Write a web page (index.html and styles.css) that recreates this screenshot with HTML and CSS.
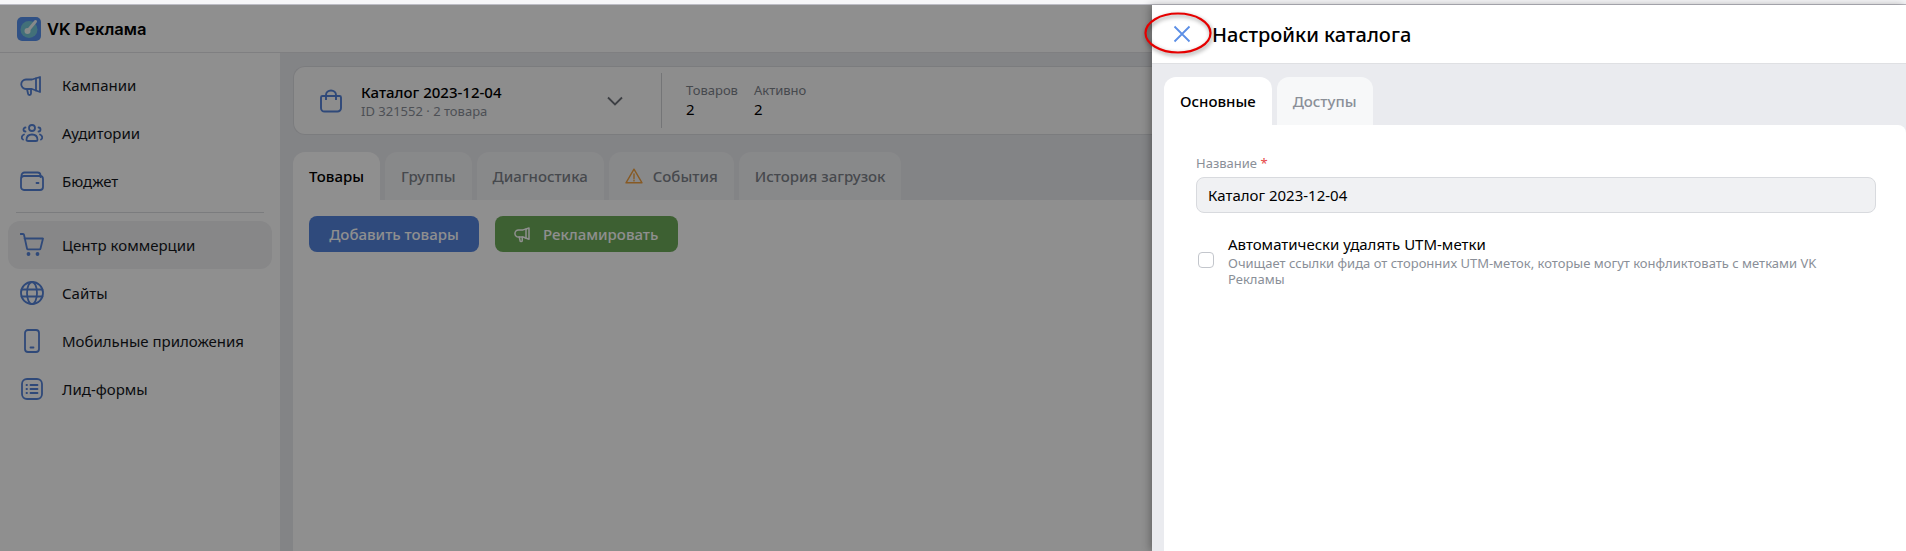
FILE: index.html
```html
<html lang="ru">
<head>
    <meta charset="UTF-8">
    <title>VK Реклама</title>
    <link rel="stylesheet" href="styles.css">
</head>
<body>
    <div class="app">
        <header class="topbar">
            <svg class="logo" viewBox="0 0 24 24">
                <rect width="24" height="24" rx="5" fill="#5690ee"/>
                <circle cx="12" cy="12.500" r="8.500" fill="#76c8d8"/>
                <path d="M11 13.500L18.500 4.500" stroke="#f0f6f6" stroke-width="3" stroke-linecap="round"/>
                <circle cx="10.500" cy="14" r="3" fill="#f0f6f6"/>
            </svg>
            <span class="brand">VK Реклама</span>
        </header>
        <div class="layout">
            <nav class="sidebar">
                <a class="nav-item">
                    <svg class="nav-icon" viewBox="0 0 24 24"><path d="M20 4v15l-8-3H6a3.500 3.500 0 0 1 0-9.500h6z"/><path d="M7 16l1 4.500a1.500 1.500 0 0 0 3 0V16"/><path d="M16 5.500v12"/></svg>
                    Кампании
                </a>
                <a class="nav-item">
                    <svg class="nav-icon" viewBox="0 0 24 24"><circle cx="12" cy="7" r="3"/><path d="M6.500 19c0-3.500 2-5.500 5.500-5.500s5.500 2 5.500 5.500c0 .8-.7 1-1.500 1H8c-.8 0-1.500-.2-1.500-1z"/><path d="M5.500 6.500a2 2 0 0 0 0 4M18.500 6.500a2 2 0 0 1 0 4M3 18.500c-2-1-1.500-4 1-5M21 18.500c2-1 1.500-4-1-5"/></svg>
                    Аудитории
                </a>
                <a class="nav-item">
                    <svg class="nav-icon" viewBox="0 0 24 24"><path d="M1.500 8V6.500A3 3 0 0 1 4.500 3.500h13a3 3 0 0 1 3 3V8"/><rect x="1" y="7" width="22" height="14" rx="3"/><path d="M16.500 14h2"/></svg>
                    Бюджет
                </a>
                <div class="nav-divider"></div>
                <a class="nav-item active">
                    <svg class="nav-icon" viewBox="0 0 24 24"><path d="M0.500 1h2.500a1 1 0 0 1 1 .8L7 15.500a1 1 0 0 0 1 .8h11.500a1 1 0 0 0 1-.8L23 5.500H4.500"/><circle class="dot" cx="8.500" cy="21" r="1"/><circle class="dot" cx="17.500" cy="21" r="1"/></svg>
                    Центр коммерции
                </a>
                <a class="nav-item">
                    <svg class="nav-icon" viewBox="0 0 24 24"><circle cx="12" cy="12" r="11"/><ellipse cx="12" cy="12" rx="5" ry="11"/><path d="M1.500 8.500h21M1.500 15.500h21"/></svg>
                    Сайты
                </a>
                <a class="nav-item">
                    <svg class="nav-icon" viewBox="0 0 24 24"><rect x="5" y="1" width="14" height="22" rx="3"/><path d="M10.500 18.500h3"/></svg>
                    Мобильные приложения
                </a>
                <a class="nav-item">
                    <svg class="nav-icon" viewBox="0 0 24 24"><rect x="2" y="2" width="20" height="20" rx="5"/><path d="M10.500 8h7M10.500 12h7M10.500 16h7M6.500 8h.5M6.500 12h.5M6.500 16h.5"/></svg>
                    Лид-формы
                </a>
            </nav>
            <main class="content">
                <section class="catalog-card">
                    <svg class="bag-icon" viewBox="0 0 24 24"><path d="M3.500 7h17a1.500 1.500 0 0 1 1.500 1.500V19a3.500 3.500 0 0 1-3.500 3.500h-13A3.500 3.500 0 0 1 2 19V8.500A1.500 1.500 0 0 1 3.500 7z"/><path d="M7 11V6a5 4.500 0 0 1 10 0v5"/></svg>
                    <div class="catalog-info">
                        <div class="catalog-name">Каталог 2023-12-04</div>
                        <div class="catalog-id">ID 321552 · 2 товара</div>
                    </div>
                    <svg class="chevron" viewBox="0 0 16 10"><path d="M1 1.500l7 7 7-7"/></svg>
                    <div class="catalog-stats">
                        <div class="stat"><div class="stat-label">Товаров</div><div class="stat-value">2</div></div>
                        <div class="stat"><div class="stat-label">Активно</div><div class="stat-value">2</div></div>
                    </div>
                </section>
                <div class="tabs">
                    <div class="tab active">Товары</div>
                    <div class="tab">Группы</div>
                    <div class="tab">Диагностика</div>
                    <div class="tab">
                        <svg class="warn-icon" viewBox="0 0 18 16"><path d="M9 1.200L1 14.800h16z"/><path d="M9 6v4.500M9 12.300v.6"/></svg>
                        События
                    </div>
                    <div class="tab">История загрузок</div>
                </div>
                <div class="tab-body">
                    <button class="btn btn-blue">Добавить товары</button>
                    <button class="btn btn-green">
                        <svg class="btn-icon" viewBox="0 0 24 24"><path d="M20 4v15l-8-3H6a3.500 3.500 0 0 1 0-9.500h6z"/><path d="M7 16l1 4.500a1.500 1.500 0 0 0 3 0V16"/><path d="M16 5.500v12"/></svg>
                        Рекламировать
                    </button>
                </div>
            </main>
        </div>
    </div>

    <div class="overlay"></div>

    <aside class="drawer">
        <div class="drawer-head">
            <svg class="close-icon" viewBox="0 0 18 18"><path d="M1.500 1.500l15 15M16.500 1.500l-15 15"/></svg>
            <h2 class="drawer-title">Настройки каталога</h2>
        </div>
        <div class="drawer-body">
            <div class="drawer-tabs">
                <div class="drawer-tab active">Основные</div>
                <div class="drawer-tab">Доступы</div>
            </div>
            <div class="drawer-card">
                <label class="field-label">Название <span class="required">*</span></label>
                <div class="field-input">Каталог 2023-12-04</div>
                <div class="check-row">
                    <span class="checkbox"></span>
                    <div class="check-text">
                        <div class="check-title">Автоматически удалять UTM-метки</div>
                        <div class="check-desc">Очищает ссылки фида от сторонних UTM-меток, которые могут конфликтовать с метками VK Рекламы</div>
                    </div>
                </div>
            </div>
        </div>
    </aside>

    <svg class="annotation" viewBox="0 0 72 46"><ellipse cx="36" cy="23" rx="32.500" ry="19.500"/></svg>
</body>
</html>
```
FILE: styles.css
```css
html, body {
    height: 100%;
}
body {
    margin: 0;
    overflow: hidden;
    background-color: #f6f6f8;
    font-family: "Noto Sans", sans-serif;
    color: #000;
}
.app {
    margin-top: 4px;
    border-top: 1px solid #bcbcc4;
    height: 546px;
    background-color: #fff;
    display: flex;
    flex-direction: column;
}
.topbar {
    height: 47px;
    flex: none;
    display: flex;
    align-items: center;
    padding-left: 17px;
    gap: 6px;
    border-bottom: 1px solid #e2e3e6;
}
.logo {
    width: 24px;
    height: 24px;
}
.brand {
    font-family: Inter, sans-serif;
    font-size: 16.500px;
    font-weight: 600;
}
.layout {
    flex: 1;
    display: flex;
    min-height: 0;
}
.sidebar {
    width: 280px;
    flex: none;
    padding: 8px 8px 0;
    box-sizing: border-box;
}
.nav-item {
    display: flex;
    align-items: center;
    height: 48px;
    padding-left: 12px;
    gap: 18px;
    font-size: 15px;
    border-radius: 12px;
    color: #14171c;
}
.nav-item.active {
    background-color: #f0f1f3;
}
.nav-icon {
    width: 24px;
    height: 24px;
    flex: none;
    fill: none;
    stroke: #5482d8;
    stroke-width: 1.8;
    stroke-linecap: round;
    stroke-linejoin: round;
}
.nav-icon .dot {
    fill: #5482d8;
}
.nav-divider {
    height: 1px;
    margin: 7px 8px 8px;
    background-color: #dcdde1;
}
.content {
    flex: 1;
    background-color: #eaebef;
    padding: 13px 0 0 13px;
    display: flex;
    flex-direction: column;
    min-width: 0;
}
.catalog-card {
    height: 69px;
    flex: none;
    box-sizing: border-box;
    background-color: #fbfbfc;
    border: 1px solid #dcdde1;
    border-right: none;
    border-radius: 12px 0 0 12px;
    display: flex;
    align-items: center;
    padding-left: 25px;
}
.bag-icon {
    width: 24px;
    height: 24px;
    fill: none;
    stroke: #5482d8;
    stroke-width: 1.9;
}
.catalog-info {
    margin-left: 18px;
    width: 246px;
}
.catalog-name {
    font-size: 15px;
    font-weight: 500;
    line-height: 20px;
}
.catalog-id {
    font-size: 13px;
    line-height: 18px;
    color: #8a8f98;
}
.chevron {
    width: 16px;
    height: 10px;
    fill: none;
    stroke: #6c7078;
    stroke-width: 1.8;
}
.catalog-stats {
    margin-left: 38px;
    height: 55px;
    border-left: 1px solid #cfd0d4;
    padding-left: 24px;
    display: flex;
    gap: 16px;
    align-items: center;
}
.stat-label {
    font-size: 13px;
    line-height: 18px;
    color: #7d828a;
}
.stat-value {
    font-size: 15px;
    line-height: 21px;
}
.tabs {
    display: flex;
    gap: 5px;
    margin-top: 17px;
    flex: none;
}
.tab {
    height: 48px;
    padding: 0 16px;
    box-sizing: border-box;
    display: flex;
    align-items: center;
    gap: 10px;
    font-size: 15px;
    font-weight: 500;
    color: #7d828a;
    background-color: #f3f4f6;
    border-radius: 12px 12px 0 0;
}
.tab.active {
    background-color: #fff;
    color: #000;
}
.warn-icon {
    width: 18px;
    height: 16px;
    fill: none;
    stroke: #f0a040;
    stroke-width: 1.4;
    stroke-linejoin: round;
    stroke-linecap: round;
}
.tab-body {
    flex: 1;
    background-color: #fff;
    padding: 16px;
    display: flex;
    gap: 16px;
    align-items: flex-start;
}
.btn {
    height: 36px;
    border: none;
    border-radius: 8px;
    font-family: inherit;
    font-size: 15px;
    font-weight: 500;
    color: #fff;
    display: flex;
    align-items: center;
    gap: 11px;
}
.btn-blue {
    width: 170px;
    justify-content: center;
    background-color: #5484de;
}
.btn-green {
    width: 183px;
    padding-left: 19px;
    background-color: #6eab5a;
}
.btn-icon {
    width: 18px;
    height: 18px;
    fill: none;
    stroke: #fff;
    stroke-width: 2;
    stroke-linecap: round;
    stroke-linejoin: round;
}
.overlay {
    position: absolute;
    top: 5px;
    left: 0;
    right: 0;
    bottom: 0;
    background-color: rgba(0, 0, 0, 0.44);
}
.drawer {
    position: absolute;
    top: 5px;
    left: 1152px;
    right: 0;
    bottom: 0;
    background-color: #eaebef;
    box-shadow: -2px 0 8px rgba(0, 0, 0, 0.3);
    display: flex;
    flex-direction: column;
}
.drawer-head {
    height: 59px;
    flex: none;
    box-sizing: border-box;
    background-color: #fff;
    border-bottom: 1px solid #dfe0e3;
    display: flex;
    align-items: center;
    padding-left: 21px;
}
.close-icon {
    width: 18px;
    height: 18px;
    fill: none;
    stroke: #5c8fe6;
    stroke-width: 1.8;
}
.drawer-title {
    margin: 0 0 0 21px;
    font-size: 20px;
    font-weight: 500;
}
.drawer-body {
    flex: 1;
    padding: 13px 0 0 12px;
    display: flex;
    flex-direction: column;
}
.drawer-tabs {
    display: flex;
    gap: 5px;
    flex: none;
}
.drawer-tab {
    height: 48px;
    padding: 0 16px;
    display: flex;
    align-items: center;
    font-size: 15px;
    font-weight: 500;
    color: #8a8f98;
    background-color: #f7f8f9;
    border-radius: 12px 12px 0 0;
}
.drawer-tab.active {
    background-color: #fff;
    color: #000;
}
.drawer-card {
    flex: 1;
    background-color: #fff;
    border-radius: 0 8px 0 0;
    padding: 28px 30px 0 32px;
}
.field-label {
    display: block;
    font-size: 13px;
    line-height: 20px;
    color: #8a8f98;
}
.required {
    color: #e64646;
}
.field-input {
    margin-top: 4px;
    height: 36px;
    box-sizing: border-box;
    background-color: #f0f1f3;
    border: 1px solid #d8dade;
    border-radius: 8px;
    padding-left: 11px;
    display: flex;
    align-items: center;
    font-size: 15px;
}
.check-row {
    margin-top: 20px;
    display: flex;
    align-items: center;
}
.checkbox {
    width: 16px;
    height: 16px;
    margin-left: 2px;
    flex: none;
    box-sizing: border-box;
    border: 1.5px solid #c3c6cc;
    border-radius: 4px;
    background-color: #fff;
}
.check-text {
    margin-left: 14px;
    flex: 1;
    padding-right: 30px;
}
.check-title {
    font-size: 15px;
    line-height: 22px;
}
.check-desc {
    font-size: 13px;
    line-height: 16px;
    color: #8a8f98;
}
.annotation {
    position: absolute;
    top: 10px;
    left: 1142px;
    width: 72px;
    height: 46px;
    fill: none;
    stroke: #e60000;
    stroke-width: 2.200;
    filter: drop-shadow(1px 2px 2px rgba(0, 0, 0, 0.45));
}
```
